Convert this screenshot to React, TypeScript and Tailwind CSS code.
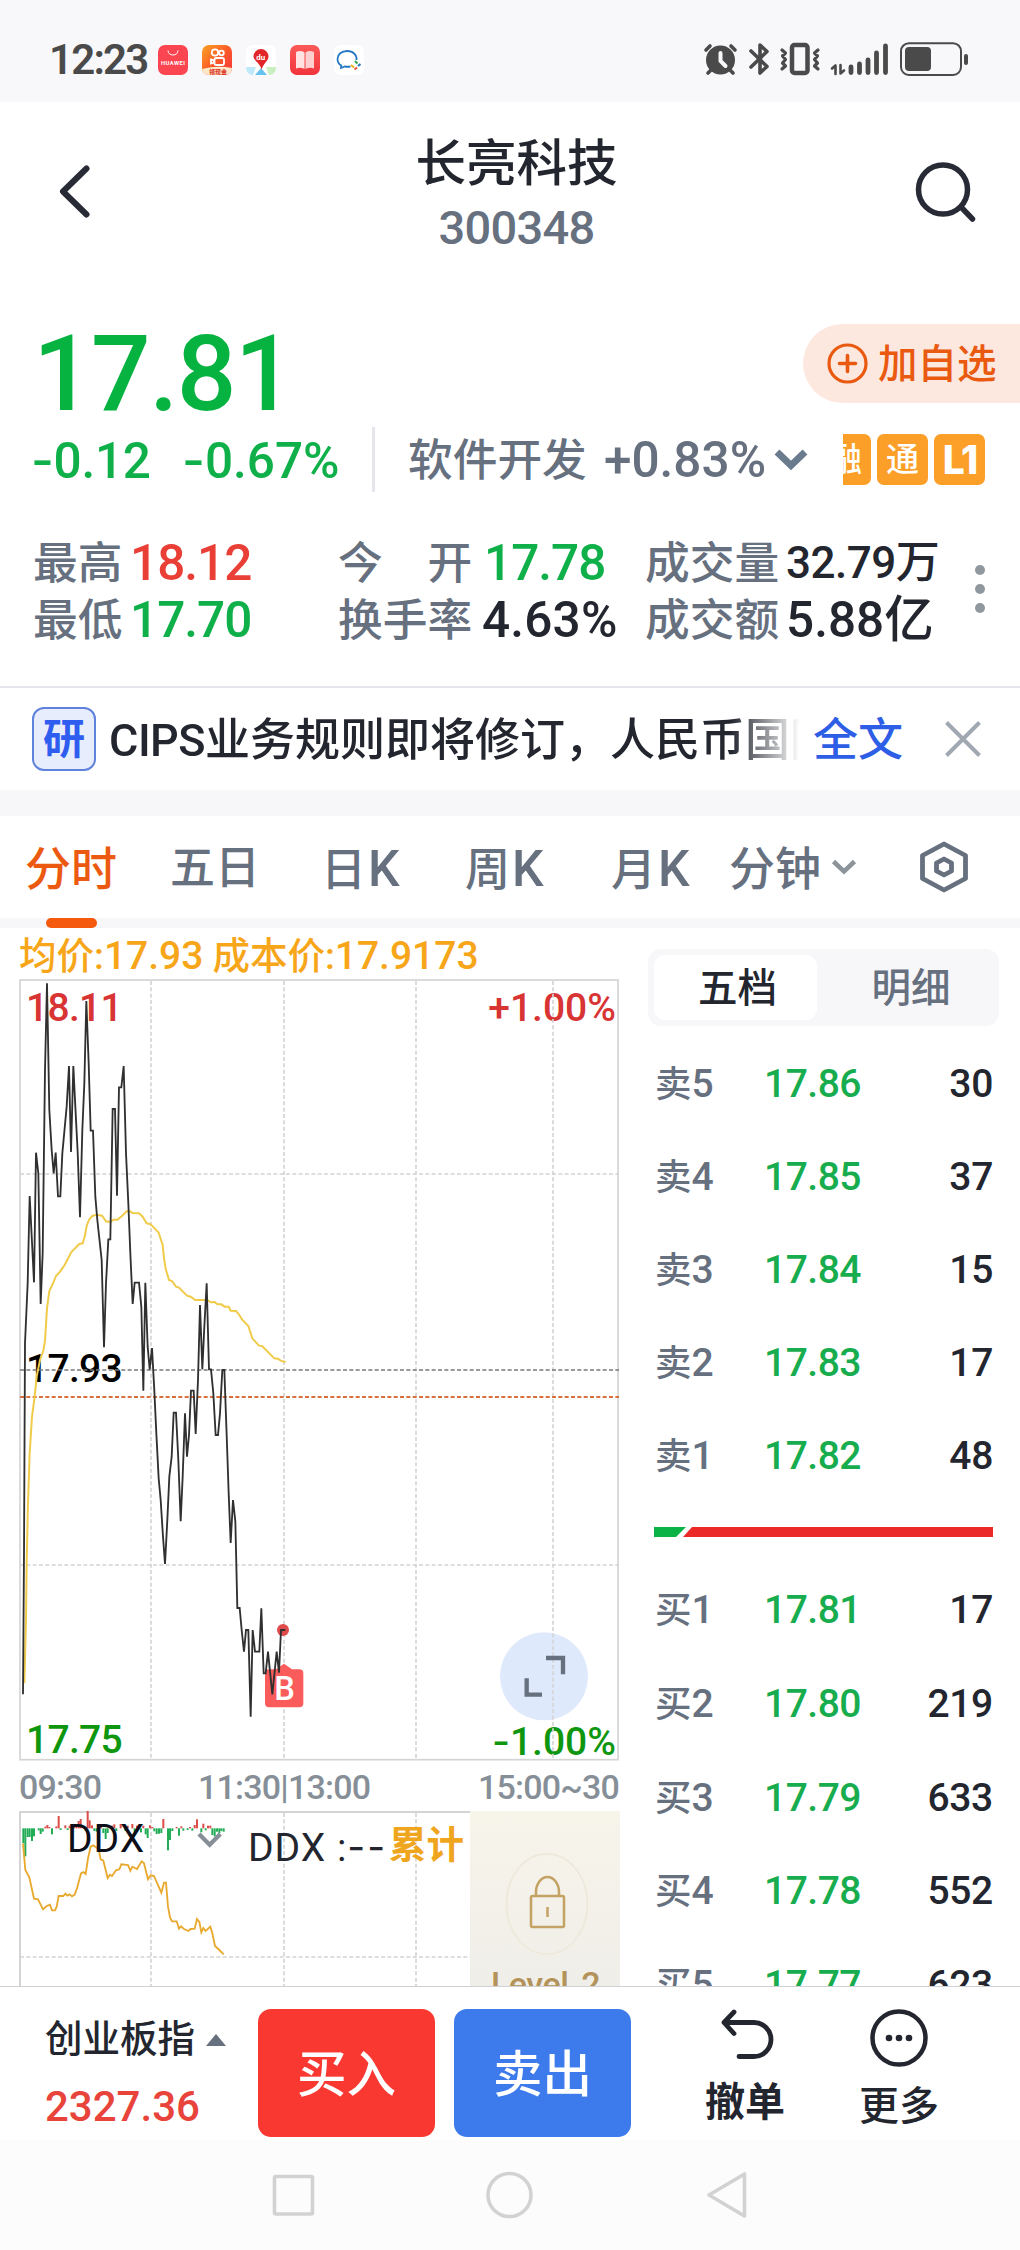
import type { ReactNode } from "react"
import clsx from "clsx"

type Level = {
  label: string
  price: string
  volume: string
}

const asks: Level[] = [
  { label: "卖5", price: "17.86", volume: "30" },
  { label: "卖4", price: "17.85", volume: "37" },
  { label: "卖3", price: "17.84", volume: "15" },
  { label: "卖2", price: "17.83", volume: "17" },
  { label: "卖1", price: "17.82", volume: "48" },
]

const bids: Level[] = [
  { label: "买1", price: "17.81", volume: "17" },
  { label: "买2", price: "17.80", volume: "219" },
  { label: "买3", price: "17.79", volume: "633" },
  { label: "买4", price: "17.78", volume: "552" },
  { label: "买5", price: "17.77", volume: "623" },
]

// Chart coordinates are in thirds of a pixel.
const priceLine =
  "69,2323 72,1900 75,1270 83,1090 89,828 102,1087 108,698 115,760 122,1152 128,1000 135,450 141,190 148,570 155,690 161,760 167,698 174,829 181,829 187,700 200,560 207,438 213,696 220,438 226,560 233,696 240,892 247,630 253,490 259,243 266,430 272,632 279,632 286,830 292,900 305,1020 312,1282 318,1090 325,958 331,958 338,567 345,567 351,827 357,502 364,502 371,438 378,700 385,850 391,1000 398,1152 404,1088 417,1088 424,1160 430,1412 436,1088 443,1280 449,1348 456,1284 463,1412 469,1540 476,1675 482,1740 489,1850 495,1932 502,1800 508,1670 515,1610 521,1478 528,1478 535,1620 542,1804 548,1670 555,1480 561,1610 567,1545 573,1412 581,1412 587,1542 594,1380 600,1155 607,1348 613,1220 620,1090 627,1348 633,1348 640,1420 647,1545 654,1545 660,1480 667,1350 673,1350 680,1545 686,1720 692,1869 699,1740 706,1804 712,2064 719,2064 725,2130 732,2195 738,2130 745,2130 752,2390 758,2130 765,2195 778,2195 784,2065 791,2260 797,2260 804,2195 817,2323 830,2195 837,2258 843,2130 856,2130"

const averageLine =
  "73,2290 78,2100 80,1930 84,1750 89,1600 96,1490 104,1430 110,1370 120,1320 130,1292 135,1262 141,1165 148,1113 160,1088 168,1068 180,1055 194,1035 214,996 238,972 248,970 254,950 260,918 267,899 277,888 290,884 306,887 318,904 331,906 340,899 352,899 366,888 380,874 390,874 398,879 417,880 428,890 440,910 452,913 476,938 488,975 492,1015 497,1046 507,1080 516,1083 528,1100 536,1102 561,1127 572,1130 586,1140 622,1140 632,1147 644,1146 652,1153 664,1153 674,1160 686,1160 692,1172 708,1173 716,1182 726,1198 745,1218 757,1255 777,1277 786,1278 823,1315 834,1316 842,1322 857,1326"

const ddxLine =
  "69,190 76,270 88,292 102,356 114,358 129,388 140,378 150,374 156,391 165,391 170,380 176,348 190,348 196,341 202,347 209,343 216,349 224,344 232,322 243,280 250,276 257,282 264,235 272,200 280,196 296,208 302,238 310,242 323,294 330,284 336,288 348,271 358,268 364,253 384,255 391,272 397,260 411,267 425,244 432,250 444,298 452,286 462,288 484,338 492,308 498,308 504,380 510,412 516,424 530,424 537,446 543,439 552,447 565,453 572,447 584,446 591,417 598,426 604,457 610,444 617,453 631,440 637,460 645,498 658,510 671,523"

// [x, signed height] around the zero line of the DDX panel
const ddxBars: [number, number][] = [
  [70, -44], [76, -84], [83, -26], [89, -26], [96, -38], [102, -24], [116, -6], [122, -17],
  [128, -10], [136, 5], [142, 10], [148, 4], [156, -18], [169, 6], [176, 37], [182, -5],
  [196, 9], [203, -5], [209, 8], [222, 7], [229, 9], [236, 22], [242, 28], [250, 6],
  [257, -6], [263, 52], [269, 24], [276, 9], [283, -8], [290, -10], [303, 8], [310, -14],
  [317, -32], [323, -14], [336, 8], [343, 12], [349, -8], [362, 13], [376, -7], [383, 8],
  [397, 13], [404, -12], [411, 8], [423, -12], [430, 8], [437, -18], [443, -29], [450, 9],
  [457, 4], [463, -9], [470, -17], [477, -16], [484, -14], [490, 28], [504, -66], [510, -35],
  [517, -8], [530, 4], [537, -22], [544, 6], [550, -7], [563, -5], [570, 4], [577, -7],
  [584, 10], [591, 27], [604, -12], [610, 14], [617, -6], [624, 8], [631, 8], [637, -20],
  [644, -24], [651, -10], [658, -14], [664, -8], [671, -10],
]

export default function App() {
  return (
    <div className="h-[2250px] w-[1020px] overflow-hidden bg-white font-['Roboto','Noto_Sans_CJK_SC',sans-serif] font-medium leading-none whitespace-nowrap text-[#23262f]">
      <StatusBar />
      <Header />
      <Quote />
      <News />
      <Tabs />
      <div className="flex h-[1058px] overflow-hidden">
        <Charts />
        <OrderBook />
      </div>
      <ActionBar />
      <SystemNav />
    </div>
  )
}

function StatusBar() {
  return (
    <div className="flex h-[102px] items-center bg-[#f8f8fb] pt-[18px] pl-[49px] text-[#4a4a4a]">
      <span className="w-[109px] text-[42px] font-semibold tracking-[-1.800px]">12:23</span>
      <div className="flex gap-[14px]">
        <AppIcon className="bg-[#fb4550]">
          <path d="M10 5.500c0 6 10 6 10 0" fill="none" stroke="#fff" strokeWidth="1" />
          <text x="15" y="19.500" textAnchor="middle" fontSize="5.800" fontWeight="700" fill="#fff" textLength="24">
            HUAWEI
          </text>
        </AppIcon>
        <AppIcon className="bg-linear-to-br from-[#fba024] via-[#fb5a27] to-[#f72d3c]">
          <g fill="none" stroke="#fff" strokeWidth="1.800">
            <circle cx="13" cy="7.500" r="3.200" />
            <circle cx="19.500" cy="8" r="2.300" />
            <rect x="12.500" y="13" width="9.500" height="7" rx="1.800" />
            <path d="M9 14.500v4l3-1v-2z" />
          </g>
          <path d="M0 24q15-4 30-1v7H0z" fill="#fde9c8" />
          <text x="16" y="29.200" textAnchor="middle" fontSize="6" fontWeight="700" fill="#d92a20">
            领现金
          </text>
        </AppIcon>
        <AppIcon className="bg-white">
          <path d="M0 22h10l-3 8H0z" fill="#bfe9fa" />
          <path d="M20 22h10v8h-7z" fill="#c9efc0" />
          <path d="M15 23l6 7H9z" fill="#67c3ee" />
          <path d="M15 4a7.500 7.500 0 0 1 7.500 7.500c0 4-5 7-7 13-1-6-8-9-8-13A7.500 7.500 0 0 1 15 4z" fill="#e2272b" />
          <text x="14.800" y="14.500" textAnchor="middle" fontSize="8" fontWeight="700" fill="#fff">
            du
          </text>
        </AppIcon>
        <AppIcon className="bg-linear-to-b from-[#fb5a58] to-[#f2323c]">
          <path d="M6 7q5-2 8.500.5V24q-4-2-8.500-.5z" fill="#ffe3e3" />
          <path d="M24 7q-5-2-8.500.5V24q4-2 8.500-.5z" fill="#ffd0d0" />
        </AppIcon>
        <AppIcon className="bg-white">
          <path d="M22.500 15c.7-5-3.500-9-9.300-9C7.500 6 3.500 9.500 3.500 14c0 3 1.500 5.200 3.800 6.500L7 23l4-1.500c2 .4 4 .3 5.500-.2" fill="none" stroke="#2378c4" strokeWidth="1.800" />
          <path d="M17 20l3 2.500" stroke="#f0b429" strokeWidth="2.200" />
          <path d="M20.500 24.500l2.500-2" stroke="#ea5a3d" strokeWidth="2.200" />
          <path d="M24 21l2.500-2" stroke="#2378c4" strokeWidth="2.200" />
          <path d="M21 16l2.500 2.500" stroke="#36a852" strokeWidth="2.200" />
        </AppIcon>
      </div>
      <svg className="ml-[339px] h-[36px] w-[272px]" viewBox="702 42 272 36" fill="none" stroke="#4a4a4a">
        <circle cx="719.500" cy="60" r="14.500" fill="#4a4a4a" stroke="none" />
        <path d="M705 50l4-4M734 50l-4-4M710 70l-3 3M729 70l3 3" strokeWidth="3.600" strokeLinecap="round" />
        <path d="M719.500 53v8l5 5" stroke="#f8f8fb" strokeWidth="4" strokeLinecap="round" />
        <path d="M750 51l16 15.500-7 6.500V45l7 6.500L750 67" strokeWidth="3.600" strokeLinecap="round" strokeLinejoin="round" />
        <rect x="791" y="45" width="15.500" height="28" rx="2.500" strokeWidth="4.500" />
        <path d="M781 50l3.500 3-3 3 3 3.500-3 3.500 3 3-3.500 3M817 50l-3.500 3 3 3-3 3.500 3 3.500-3 3 3.500 3" strokeWidth="3.200" strokeLinecap="round" strokeLinejoin="round" />
        <path d="M831 68.500l3.500-3v8.500M839.500 65v8.500l3.500-3" strokeWidth="2.600" strokeLinecap="round" strokeLinejoin="round" />
        <path d="M850 67v5.500M858.500 64v8.500M867 60v12.500M875.500 53v19.500M884.500 46v26.500" strokeWidth="4.800" strokeLinecap="round" />
        <rect x="900" y="43.200" width="60" height="31.800" rx="8" strokeWidth="2" />
        <rect x="904" y="47" width="26" height="24" rx="4" fill="#4a4a4a" stroke="none" />
        <path d="M965 56v7" strokeWidth="4" strokeLinecap="round" />
      </svg>
    </div>
  )
}

function AppIcon({ className, children }: { className: string; children: ReactNode }) {
  return (
    <div className={clsx("size-[30px] overflow-hidden rounded-[7px]", className)}>
      <svg viewBox="0 0 30 30" className="size-full">
        {children}
      </svg>
    </div>
  )
}

function Header() {
  return (
    <header className="flex h-[178px] items-center justify-between pr-[43px] pl-[58px]">
      <svg className="h-[56px] w-[36px]" viewBox="0 0 36 56" fill="none" stroke="#282b36" strokeWidth="6" strokeLinecap="round" strokeLinejoin="round">
        <path d="M28.500 5.500L5 28.500l23.500 23" />
      </svg>
      <div className="flex flex-col items-center gap-[14px] pt-2 pl-[26px]">
        <h1 className="text-[50.500px]">长亮科技</h1>
        <span className="text-[47px] tracking-[-0.700px] text-[#66707f]">300348</span>
      </div>
      <svg className="size-[64px]" viewBox="0 0 64 64" fill="none" stroke="#282b36" strokeWidth="5.500" strokeLinecap="round">
        <circle cx="30" cy="30.500" r="24.500" />
        <path d="M48 48l11.500 12" />
      </svg>
    </header>
  )
}

// The wider dash of signed values
function Dash() {
  return <span className="-ml-[2px] font-['Inter']">-</span>
}

function Quote() {
  return (
    <section className="border-b-2 border-[#e5e6ed] pt-[40px] pb-[38px]">
      <div className="flex h-[107px] items-center justify-between pl-[33px]">
        <span className="pt-[2px] text-[105px] tracking-[-1.600px] text-[#06b341]">17.81</span>
        <button className="mb-5 flex h-[79px] w-[217px] items-center gap-[10px] rounded-l-full bg-[#fde8e0] pl-[24px] text-[#e9590f]">
          <svg className="size-[41px]" viewBox="0 0 41 41" fill="none" stroke="currentColor" strokeWidth="3.200" strokeLinecap="round">
            <circle cx="20.500" cy="20.500" r="18.500" />
            <path d="M20.500 12.500v16M12.500 20.500h16" strokeWidth="3.600" />
          </svg>
          <span className="pt-[2px] text-[39.500px]">加自选</span>
        </button>
      </div>
      <div className="flex h-[65px] items-center pl-[33px]">
        <span className="w-[151px] pt-[3px] text-[49.500px] tracking-[-0.300px] text-[#0fb04a]">
          <Dash />
          0.12
        </span>
        <span className="w-[188px] pt-[3px] text-[49.500px] text-[#0fb04a]">
          <Dash />
          0.67%
        </span>
        <div className="h-full w-[3px] bg-[#e4e6ec]" />
        <span className="ml-[33px] w-[196px] pt-[3px] text-[44.700px] text-[#66707f]">软件开发</span>
        <span className="w-[170px] pt-[3px] text-[49.500px] text-[#66707f]">+0.83%</span>
        <svg className="h-[24px] w-[34px]" viewBox="0 0 34 24" fill="none" stroke="#6a7b8d" strokeWidth="7">
          <path d="M3 4l14 13.500L31 4" />
        </svg>
        <div className="ml-[35px] flex h-[51px] w-[142px] justify-end gap-[6px] overflow-hidden">
          <Badge className="text-[33px]">融</Badge>
          <Badge className="text-[33px]">通</Badge>
          <Badge className="font-['Inter'] text-[39px] font-extrabold tracking-[-2px]">L1</Badge>
        </div>
      </div>
      <div className="mt-[42px] flex">
        <div className="grid grid-cols-[305px_307px_299px] pl-[33px]">
          <Stat label="最高" value="18.12" className="w-[97px]" valueClassName="tracking-[-1px] text-[49.500px] text-[#e93f36]" />
          <Stat label="今　开" value="17.78" className="w-[146px]" valueClassName="tracking-[-1px] text-[49.500px] text-[#0fb04a]" />
          <Stat label="成交量" value="32.79万" className="w-[141px]" valueClassName="pb-[3px] text-[44px] tracking-[-0.500px]" />
          <Stat label="最低" value="17.70" className="w-[97px]" valueClassName="tracking-[-1px] text-[49.500px] text-[#0fb04a]" />
          <Stat label="换手率" value="4.63%" className="w-[144px]" valueClassName="text-[49.500px] tracking-[0.200px]" />
          <Stat label="成交额" value="5.88亿" className="w-[141px]" valueClassName="text-[49.500px]" />
        </div>
        <div className="flex flex-col gap-[9px] pt-[31px] pl-[31px]">
          <i className="size-[10px] rounded-full bg-[#8f989e]" />
          <i className="size-[10px] rounded-full bg-[#8f989e]" />
          <i className="size-[10px] rounded-full bg-[#8f989e]" />
        </div>
      </div>
    </section>
  )
}

function Badge({ className, children }: { className: string; children: ReactNode }) {
  return (
    <span className={clsx("flex size-[51px] shrink-0 items-center justify-center rounded-[7px] bg-[#fb9f29] text-white", className)}>
      {children}
    </span>
  )
}

function Stat({
  label,
  value,
  className,
  valueClassName,
}: {
  label: string
  value: string
  className: string
  valueClassName: string
}) {
  return (
    <div className="flex h-[57px] items-center pt-[3px]">
      <span className={clsx("shrink-0 text-[44.700px] text-[#66707f]", className)}>{label}</span>
      <span className={valueClassName}>{value}</span>
    </div>
  )
}

function News() {
  return (
    <section className="flex h-[102px] items-center pl-[32px]">
      <span className="flex size-[64px] items-center justify-center rounded-[12px] border-2 border-[#5f82dc] bg-[#e7edfd] pt-[2px] text-[42px] font-bold text-[#2f5df0]">
        研
      </span>
      <p className="ml-[13px] w-[691px] overflow-hidden mask-r-from-90% pt-[3px] text-[45px] leading-[60px]">
        <span className="tracking-[-0.500px]">CIPS</span>业务规则即将修订，人民币国际
      </p>
      <span className="ml-[13px] pt-[3px] text-[45px] text-[#2f5ee6]">全文</span>
      <svg className="ml-[41px] size-[38px]" viewBox="0 0 38 38" stroke="#a0a8b2" strokeWidth="4">
        <path d="M2.500 2.500l33 33M35.500 2.500l-33 33" />
      </svg>
    </section>
  )
}

function Tabs() {
  return (
    <nav className="border-t-[26px] border-[#f7f7fa]">
      <div className="flex h-[102px] items-center pt-[3px] pl-[25px] text-[46px] text-[#66707f]">
        <span className="w-[145px] text-[#ec5a12]">分时</span>
        <span className="w-[151px] text-[45px]">五日</span>
        <PeriodTab unit="日" className="w-[144px]" />
        <PeriodTab unit="周" className="w-[146px]" />
        <PeriodTab unit="月" className="w-[118px]" />
        <span className="w-[102px]">分钟</span>
        <svg className="mb-[3px] h-[18px] w-[26px]" viewBox="0 0 26 18" fill="none" stroke="#8b949b" strokeWidth="4.500">
          <path d="M2.500 3.500L13 13.500l10.500-10" />
        </svg>
        <svg className="mb-[3px] ml-[62px] h-[54px] w-[50px]" viewBox="0 0 50 54" fill="none" stroke="#66707f" strokeWidth="4.800" strokeLinejoin="round">
          <path d="M25 4l21.500 11.500v23L25 50 3.500 38.500v-23z" />
          <path d="M25 19l7.500 4v8L25 35l-7.500-4v-8z" />
        </svg>
      </div>
      <div className="h-[10px] bg-[#f7f7fa] pl-[46px]">
        <div className="h-full w-[51px] rounded-full bg-[#f5590d]" />
      </div>
    </nav>
  )
}

function PeriodTab({ unit, className }: { unit: string; className: string }) {
  return (
    <span className={clsx("text-[45px]", className)}>
      {unit}
      <span className="ml-[2px] text-[50px]">K</span>
    </span>
  )
}

function Charts() {
  return (
    <div className="w-[648px] shrink-0 pl-[19px]">
      <div className="flex h-[51px] items-center pt-[6px] text-[37.500px] text-[#f7a61a]">
        <span>均价:</span>
        <span className="mr-[9px] text-[39px]">17.93</span>
        <span>成本价:</span>
        <span className="text-[39px]">17.9173</span>
      </div>
      <div className="relative h-[782px] w-[601px] text-[39px] tracking-[-0.700px]">
        <span className="absolute top-[10px] left-[7px] text-[#d83434]">18.11</span>
        <span className="absolute top-[10px] right-[4px] tracking-normal text-[#d83434]">+1.00%</span>
        <span className="absolute top-[371px] left-[7px] text-black">17.93</span>
        <span className="absolute top-[742px] left-[7px] text-[#0f960f]">17.75</span>
        <span className="absolute top-[742px] right-[4px] tracking-normal text-[#0f960f]">
          <Dash />
          1.00%
        </span>
        <svg className="absolute inset-0 size-full" viewBox="57 177 1803 2346" fill="none">
          <circle cx="1632" cy="2269" r="132" fill="#dfe9fc" />
          <g stroke="#d4d4d4" strokeWidth="5">
            <rect x="60" y="180" width="1794" height="2339" />
            <path d="M453 183V2517M852 183V2517M1248 183V2517M1659 183V2517M60 762H1857M60 1935H1857" strokeDasharray="12 7" />
          </g>
          <path d="M60 1350H1857" stroke="#757a7a" strokeWidth="5" strokeDasharray="12 7" />
          <path d="M60 1431H1857" stroke="#d9713f" strokeWidth="5.500" strokeDasharray="12 7" />
          <path d="M852 2231l24 17h22q12 0 12 12v90q0 12-12 12h-91q-12 0-12-12v-90q0-12 12-12h21z" fill="#fa5c5c" />
          <text x="853" y="2339" textAnchor="middle" fontSize="98" fontWeight="500" fill="#fff">
            B
          </text>
          <circle cx="849" cy="2130" r="18" fill="#df4a4a" />
          <polyline points={averageLine} stroke="#f0cb4a" strokeWidth="6" />
          <polyline points={priceLine} stroke="#303030" strokeWidth="5.500" />
          <path d="M1638 2214h51v49M1580 2275v49h46" stroke="#66707f" strokeWidth="13" />
        </svg>
      </div>
      <div className="flex h-[50px] w-[600px] items-center pt-[2px] text-[34px] tracking-[-0.800px] text-[#868f97]">
        <span className="w-[179px]">09:30</span>
        <span>11:30|13:00</span>
        <span className="ml-auto">15:00~30</span>
      </div>
      <div className="relative h-[175px] w-[601px]">
        <svg className="absolute inset-0 size-full" viewBox="57 93 1803 525" fill="none">
          <path d="M60 618V96H1854" stroke="#d4d4d4" strokeWidth="6" />
          <path d="M453 99V618M852 99V618M1248 99V618M60 531H1410" stroke="#d4d4d4" strokeWidth="5" strokeDasharray="12 7" />
          {ddxBars.map(([x, height]) => (
            <rect
              key={x}
              x={x - 3}
              y={height > 0 ? 145 - height : 145}
              width="6"
              height={Math.abs(height)}
              fill={height > 0 ? "#dc4c48" : "#21ac55"}
            />
          ))}
          <polyline points={ddxLine} stroke="#e8a92e" strokeWidth="5.500" />
          <path d="M597 162l32 32 32-32" stroke="#868f97" strokeWidth="13" />
        </svg>
        <span className="absolute top-[9px] left-[48px] text-[39px] font-normal tracking-[1px] text-[#0c0f1a]">DDX</span>
        <span className="absolute top-[16px] left-[229px] text-[39px] font-normal tracking-[1px]">
          DDX :
          <span className="font-['Inter'] tracking-[2px]">--</span>
        </span>
        <span className="absolute top-[16px] left-[370px] text-[37.500px] font-bold text-[#f0a51e]">累计</span>
        <div className="absolute top-0 right-0 h-[175px] w-[150px] overflow-hidden bg-linear-to-b from-[#f7f4ea] to-[#efeee8]">
          <svg className="size-full" viewBox="0 0 150 175" fill="none" stroke="#c3a263" strokeWidth="2.500">
            <ellipse cx="77" cy="93" rx="40.500" ry="50" stroke="#ece7d8" strokeWidth="1.500" />
            <rect x="61" y="85" width="33" height="31" rx="1.500" />
            <path d="M66 85v-4a11.500 15 0 0 1 23 0v4M77.500 96v10" />
          </svg>
          <span className="absolute top-[156px] left-[21px] text-[34px] tracking-[-0.500px] text-[#b3935a] [word-spacing:5px]">
            Level 2
          </span>
        </div>
      </div>
    </div>
  )
}

function OrderBook() {
  return (
    <div className="w-[351px] pt-[21px]">
      <div className="flex h-[77px] items-center rounded-[13px] bg-[#f7f7fa] pl-[6px] text-[39.500px]">
        <span className="flex h-[65px] w-[163px] shrink-0 items-center justify-center rounded-[11px] bg-white pl-[4px] pt-[3px]">五档</span>
        <span className="flex grow justify-center pt-[3px] pl-[6px] text-[#66707f]">明细</span>
      </div>
      <div className="pt-[12px]">
        {asks.map((level) => (
          <LevelRow key={level.label} level={level} className="h-[93px]" />
        ))}
      </div>
      <svg className="mt-[24px] ml-[6px] h-[10px] w-[339px]" viewBox="0 0 339 10">
        <path d="M0 0h32L22 10H0z" fill="#0bb347" />
        <path d="M38 0h301v10H29z" fill="#eb2a27" />
      </svg>
      <div className="pt-[27px]">
        {bids.map((level) => (
          <LevelRow key={level.label} level={level} className="h-[93.700px]" />
        ))}
      </div>
    </div>
  )
}

function LevelRow({ level, className }: { level: Level; className: string }) {
  return (
    <div className={clsx("flex items-center pr-[6px] pl-[7px] text-[39px]", className)}>
      <span className="w-[109px] text-[36.500px] text-[#66707f]">
        {level.label.slice(0, 1)}
        <span className="text-[39px]">{level.label.slice(1)}</span>
      </span>
      <span className="tracking-[-0.500px] text-[#17ad4e]">{level.price}</span>
      <span className="ml-auto tracking-[-0.300px]">{level.volume}</span>
    </div>
  )
}

function ActionBar() {
  return (
    <footer className="flex h-[154px] border-t border-[#cfd1d4]">
      <div className="w-[258px] pt-[34px] pl-[45px]">
        <div className="flex items-center gap-[11px] text-[37.500px]">
          创业板指
          <svg className="h-[12px] w-[20px]" viewBox="0 0 20 12" fill="#66707f">
            <path d="M10 0l10 12H0z" />
          </svg>
        </div>
        <div className="mt-[27px] text-[42px] text-[#e8443c]">2327.36</div>
      </div>
      <button className="mt-[22px] h-[128px] w-[177px] rounded-[13px] bg-[#fa3832] pt-[5px] text-[49.500px] text-white">买入</button>
      <button className="mt-[22px] ml-[19px] h-[128px] w-[177px] rounded-[13px] bg-[#3d7aec] pt-[5px] text-[49.500px] text-white">
        卖出
      </button>
      <div className="ml-[63px] flex w-[102px] flex-col items-center text-[40px]">
        <svg className="mt-[22px] ml-[4px] h-[54px] w-[54px]" viewBox="0 0 54 54" fill="none" stroke="#23262f" strokeWidth="4.800" strokeLinecap="round" strokeLinejoin="round">
          <path d="M14 3L4 13.500l10 11M5 13.500h29a17 17 0 0 1 0 34H19" />
        </svg>
        <span className="mt-[20px] font-bold">撤单</span>
      </div>
      <div className="ml-[52px] flex w-[102px] flex-col items-center text-[40px]">
        <svg className="mt-[21px] size-[60px]" viewBox="0 0 60 60" fill="#23262f">
          <circle cx="30" cy="30" r="26.500" fill="none" stroke="#23262f" strokeWidth="4.500" />
          <circle cx="20" cy="30" r="3.300" />
          <circle cx="30" cy="30" r="3.300" />
          <circle cx="40" cy="30" r="3.300" />
        </svg>
        <span className="mt-[19px]">更多</span>
      </div>
    </footer>
  )
}

function SystemNav() {
  return (
    <div className="flex h-[110px] items-center bg-[#fcfcfc] pl-[268px]">
      <svg className="h-[50px] w-[484px]" viewBox="268 2170 484 50" fill="none" stroke="#d2d2d2" strokeWidth="3.600" strokeLinejoin="round">
        <rect x="274.500" y="2176.500" width="38" height="37.500" rx="1.500" />
        <circle cx="509.500" cy="2195" r="21.500" />
        <path d="M744.500 2174v42L709 2195z" />
      </svg>
    </div>
  )
}
